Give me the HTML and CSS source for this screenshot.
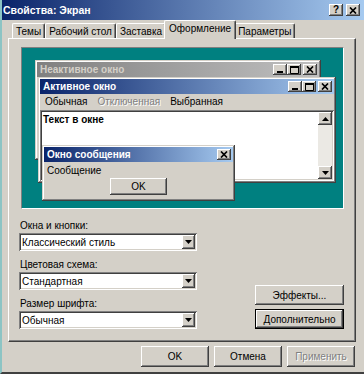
FILE: index.html
```html
<!DOCTYPE html>
<html lang="ru">
<head>
  <meta charset="UTF-8" />
  <title>Свойства: Экран</title>
  <link rel="stylesheet" href="styles.css">
</head>
<body>

  <div class="dialog">
    <div class="titlebar">
      <span class="title">Свойства: Экран</span>
      <div class="caption-btns">
        <span class="cbtn help">?</span>
        <span class="cbtn">
          <svg width="8" height="7" viewBox="0 0 8 7"><path d="M1 0.5l6 6M7 0.5l-6 6" stroke="#000" stroke-width="1.7"/></svg>
        </span>
      </div>
    </div>

    <div class="tabs">
      <div class="tab">Темы</div>
      <div class="tab">Рабочий стол</div>
      <div class="tab">Заставка</div>
      <div class="tab active">Оформление</div>
      <div class="tab">Параметры</div>
    </div>

    <div class="panel">
      <div class="preview">

        <div class="win inactive">
          <div class="wtitle">
            <span>Неактивное окно</span>
            <div class="wbtns">
              <span class="wbtn"><svg width="7" height="7" viewBox="0 0 7 7"><rect x="0" y="5" width="6" height="2"/></svg></span>
              <span class="wbtn"><svg width="9" height="8" viewBox="0 0 9 8"><rect x="0" y="0" width="9" height="2"/><path d="M0.5 1v6.5h8V1" fill="none" stroke="#000"/></svg></span>
              <span class="wbtn close"><svg width="8" height="7" viewBox="0 0 8 7"><path d="M1 0.5l6 6M7 0.5l-6 6" stroke="#000" stroke-width="1.7"/></svg></span>
            </div>
          </div>
        </div>

        <div class="win active">
          <div class="wtitle">
            <span>Активное окно</span>
            <div class="wbtns">
              <span class="wbtn"><svg width="7" height="7" viewBox="0 0 7 7"><rect x="0" y="5" width="6" height="2"/></svg></span>
              <span class="wbtn"><svg width="9" height="8" viewBox="0 0 9 8"><rect x="0" y="0" width="9" height="2"/><path d="M0.5 1v6.5h8V1" fill="none" stroke="#000"/></svg></span>
              <span class="wbtn close"><svg width="8" height="7" viewBox="0 0 8 7"><path d="M1 0.5l6 6M7 0.5l-6 6" stroke="#000" stroke-width="1.7"/></svg></span>
            </div>
          </div>
          <div class="menu">
            <span>Обычная</span>
            <span class="disabled">Отключенная</span>
            <span>Выбранная</span>
          </div>
          <div class="textbox">
            <div class="text">Текст в окне</div>
            <div class="scrollbar">
              <span class="sbtn"><svg width="7" height="4" viewBox="0 0 7 4"><path d="M0 4h7L3.5 0z"/></svg></span>
              <span class="track"></span>
              <span class="sbtn"><svg width="7" height="4" viewBox="0 0 7 4"><path d="M0 0h7L3.5 4z"/></svg></span>
            </div>
          </div>
        </div>

        <div class="win msg">
          <div class="wtitle">
            <span>Окно сообщения</span>
            <div class="wbtns">
              <span class="wbtn"><svg width="8" height="7" viewBox="0 0 8 7"><path d="M1 0.5l6 6M7 0.5l-6 6" stroke="#000" stroke-width="1.7"/></svg></span>
            </div>
          </div>
          <div class="msg-text">Сообщение</div>
          <div class="msg-actions"><span class="btn small">OK</span></div>
        </div>

      </div>

      <div class="settings">
        <div class="fields">
          <div class="field">
            <span class="field-label">Окна и кнопки:</span>
            <div class="select">
              <span>Классический стиль</span>
              <span class="arrow"><svg width="7" height="4" viewBox="0 0 7 4"><path d="M0 0h7L3.5 4z"/></svg></span>
            </div>
          </div>
          <div class="field">
            <span class="field-label">Цветовая схема:</span>
            <div class="select">
              <span>Стандартная</span>
              <span class="arrow"><svg width="7" height="4" viewBox="0 0 7 4"><path d="M0 0h7L3.5 4z"/></svg></span>
            </div>
          </div>
          <div class="field">
            <span class="field-label">Размер шрифта:</span>
            <div class="select">
              <span>Обычная</span>
              <span class="arrow"><svg width="7" height="4" viewBox="0 0 7 4"><path d="M0 0h7L3.5 4z"/></svg></span>
            </div>
          </div>
        </div>

        <div class="side-btns">
          <span class="btn">Эффекты...</span>
          <span class="btn default">Дополнительно</span>
        </div>
      </div>
    </div>

    <div class="footer">
      <span class="btn">OK</span>
      <span class="btn">Отмена</span>
      <span class="btn disabled">Применить</span>
    </div>
  </div>

</body>
</html>
```

FILE: styles.css
```css
body {
  margin: 0;
  font-family: "Liberation Sans", Arial, sans-serif;
  font-size: 10px;
  color: #000;
  background-color: #d4d0c8;
}

.dialog {
  width: 364px;
  height: 374px;
  box-sizing: border-box;
  background-color: #d4d0c8;
  border-left: 2px solid #8cc4c4;
  border-bottom: 2px solid #404040;
  overflow: hidden;
}

/* title bar */
.titlebar {
  height: 20px;
  display: flex;
  align-items: center;
  justify-content: space-between;
  padding: 0 4px 0 1px;
  background: linear-gradient(to right, #0a246a, #a6caf0);
}

.title {
  color: #fff;
  font-weight: bold;
  font-size: 10.5px;
}

.caption-btns {
  display: flex;
  gap: 3px;
}

.cbtn {
  width: 14px;
  height: 12px;
  display: flex;
  align-items: center;
  justify-content: center;
  background-color: #d4d0c8;
  box-shadow: inset -1px -1px #404040, inset 1px 1px #fff, inset -2px -2px #808080;
}

.cbtn.help {
  font-weight: bold;
  font-size: 10px;
  line-height: 12px;
}

/* tabs */
.tabs {
  display: flex;
  align-items: flex-end;
  height: 18px;
  padding-left: 10px;
  position: relative;
  z-index: 1;
}

.tab {
  height: 15px;
  line-height: 15px;
  padding: 0 3px;
  border-top: 1px solid #fff;
  border-left: 1px solid #fff;
  border-right: 1px solid #404040;
  box-shadow: inset -1px 0 #808080;
  box-sizing: border-box;
  border-radius: 2px 2px 0 0;
}

.tab.active {
  height: 19px;
  line-height: 16px;
  margin: 0 -2px -1px;
  padding: 0 4px;
  background-color: #d4d0c8;
  position: relative;
}

/* panel */
.panel {
  margin-left: 6px;
  width: 348px;
  height: 304px;
  box-sizing: border-box;
  border: 1px solid;
  border-color: #fff #404040 #404040 #fff;
  box-shadow: inset -1px -1px #808080;
  padding: 8px 11px 0 12px;
}

.preview {
  position: relative;
  height: 162px;
  box-sizing: border-box;
  background-color: #008080;
  border: 1px solid;
  border-color: #808080 #fff #fff #808080;
  overflow: hidden;
}

.win {
  position: absolute;
  box-sizing: border-box;
  padding: 2px;
  background-color: #d4d0c8;
  box-shadow: inset -1px -1px #404040, inset 1px 1px #d4d0c8, inset -2px -2px #808080, inset 2px 2px #fff;
}

.win.inactive {
  left: 13px;
  top: 12px;
  width: 286px;
  height: 100px;
}

.win.active {
  left: 16px;
  top: 29px;
  width: 298px;
  height: 106px;
}

.win.msg {
  left: 20px;
  top: 97px;
  width: 193px;
  height: 56px;
}

.wtitle {
  height: 15px;
  display: flex;
  align-items: center;
  justify-content: space-between;
  padding: 0 2px 0 3px;
  color: #fff;
  font-weight: bold;
  background: linear-gradient(to right, #0a246a, #a6caf0);
}

.inactive .wtitle {
  color: #d4d0c8;
  background: linear-gradient(to right, #808080, #c0c0c0);
}

.wbtns {
  display: flex;
}

.wbtn {
  width: 14px;
  height: 11px;
  display: flex;
  align-items: center;
  justify-content: center;
  background-color: #d4d0c8;
  box-shadow: inset -1px -1px #404040, inset 1px 1px #fff, inset -2px -2px #808080;
}

.wbtn.close {
  margin-left: 2px;
}

.menu {
  height: 15px;
  display: flex;
  align-items: center;
  gap: 10px;
  padding-left: 5px;
}

.disabled {
  color: #808080;
  text-shadow: 1px 1px #fff;
}

.textbox {
  display: flex;
  height: 71px;
  margin-top: 1px;
  background-color: #fff;
  box-shadow: inset 1px 1px #808080, inset -1px -1px #fff, inset 2px 2px #404040, inset -2px -2px #d4d0c8;
  padding: 2px;
  box-sizing: border-box;
}

.text {
  flex: 1;
  font-weight: bold;
  padding: 2px 1px;
}

.scrollbar {
  width: 14px;
  display: flex;
  flex-direction: column;
}

.sbtn {
  height: 13px;
  display: flex;
  align-items: center;
  justify-content: center;
  background-color: #d4d0c8;
  box-shadow: inset -1px -1px #404040, inset 1px 1px #fff, inset -2px -2px #808080;
}

.track {
  flex: 1;
  background-color: #ebe9e4;
}

.msg-text {
  padding: 3px 0 0 3px;
  line-height: 12px;
}

.msg-actions {
  display: flex;
  justify-content: center;
  margin-top: 1px;
}

/* buttons */
.btn {
  display: flex;
  align-items: center;
  justify-content: center;
  width: 89px;
  height: 20px;
  box-sizing: border-box;
  background-color: #d4d0c8;
  box-shadow: inset -1px -1px #404040, inset 1px 1px #fff, inset -2px -2px #808080;
}

.btn.small {
  width: 57px;
  height: 17px;
}

.btn.default {
  border: 1px solid #000;
}

/* settings */
.settings {
  display: flex;
  justify-content: space-between;
  align-items: flex-end;
  margin-top: 11px;
}

.fields {
  width: 178px;
  margin-left: -2px;
  display: flex;
  flex-direction: column;
  gap: 8px;
}

.field-label {
  display: block;
  line-height: 12px;
  margin-bottom: 1px;
  padding-left: 1px;
}

.select {
  height: 18px;
  box-sizing: border-box;
  display: flex;
  align-items: center;
  justify-content: space-between;
  padding-left: 3px;
  background-color: #fff;
  box-shadow: inset 1px 1px #808080, inset -1px -1px #fff, inset 2px 2px #404040, inset -2px -2px #d4d0c8;
}

.arrow {
  width: 13px;
  height: 14px;
  margin-right: 2px;
  display: flex;
  align-items: center;
  justify-content: center;
  background-color: #d4d0c8;
  box-shadow: inset -1px -1px #404040, inset 1px 1px #fff, inset -2px -2px #808080;
}

.side-btns {
  display: flex;
  flex-direction: column;
  gap: 4px;
}

.footer {
  display: flex;
  justify-content: flex-end;
  gap: 5px;
  margin-top: 4px;
  padding-right: 9px;
}

.footer .btn {
  width: 68px;
  height: 21px;
}
```
